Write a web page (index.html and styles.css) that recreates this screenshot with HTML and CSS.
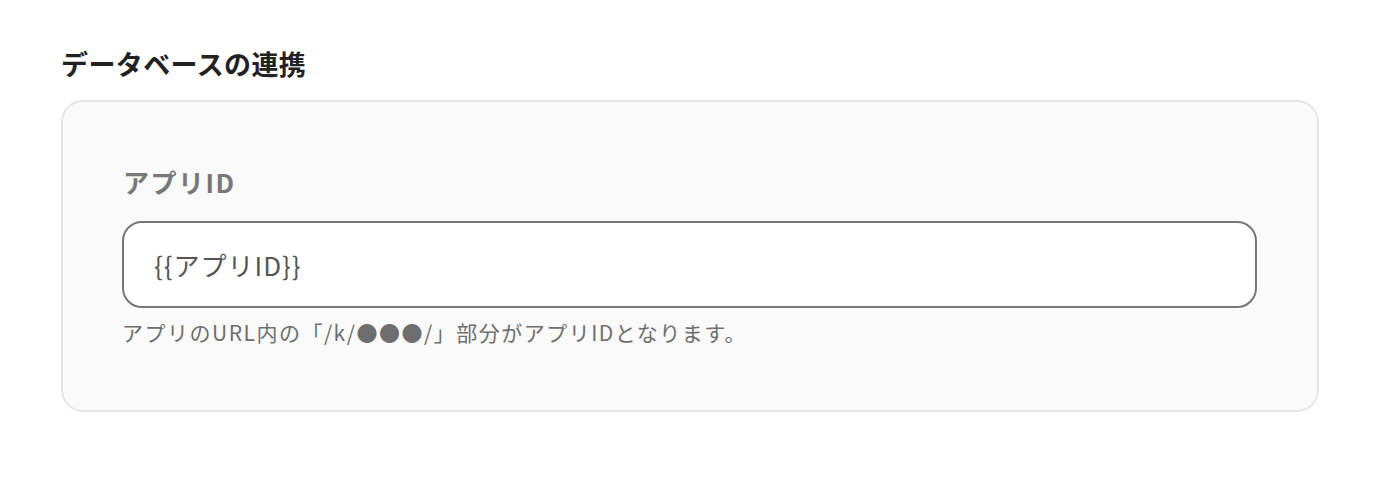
FILE: index.html
```html
<!DOCTYPE html>
<html lang="ja">
<head>
<meta charset="utf-8">
<link rel="stylesheet" href="styles.css">
</head>
<body>
<div class="page">
  <h2 class="title">データベースの連携</h2>
  <div class="card">
    <div class="label">アプリID</div>
    <div class="input">{{アプリID}}</div>
    <p class="help">アプリのURL内の「/k/●●●/」部分がアプリIDとなります。</p>
  </div>
</div>
</body>
</html>
```
FILE: styles.css
```css
html, body { margin: 0; padding: 0; background: #fff; }
body { font-family: "Noto Sans CJK JP", "Noto Sans", sans-serif; }
.page { padding: 44px 81px 0 61px; }
.title { margin: 0 0 16px 0; font-size: 27px; line-height: 40px; font-weight: 700; color: #222; letter-spacing: 0.4px; }
.card {
  border: 2px solid #e4e5e8;
  border-radius: 22px;
  background: #fafafa;
  padding: 62px 60px 64px 59px;
}
.label { font-size: 26px; font-weight: 700; color: #787878; line-height: 36px; margin: 0 0 21px 1px; letter-spacing: 1.5px; }
.input {
  border: 2px solid #777;
  border-radius: 20px;
  background: #fff;
  box-sizing: border-box;
  height: 87px;
  padding: 0 28px 0 30px;
  display: flex; align-items: center;
  font-size: 26px; color: #555; letter-spacing: 1px;
}
.help { margin: 10px 0 0 0; font-size: 21px; color: #6e6e6e; line-height: 28px; letter-spacing: 1.5px; }
```
